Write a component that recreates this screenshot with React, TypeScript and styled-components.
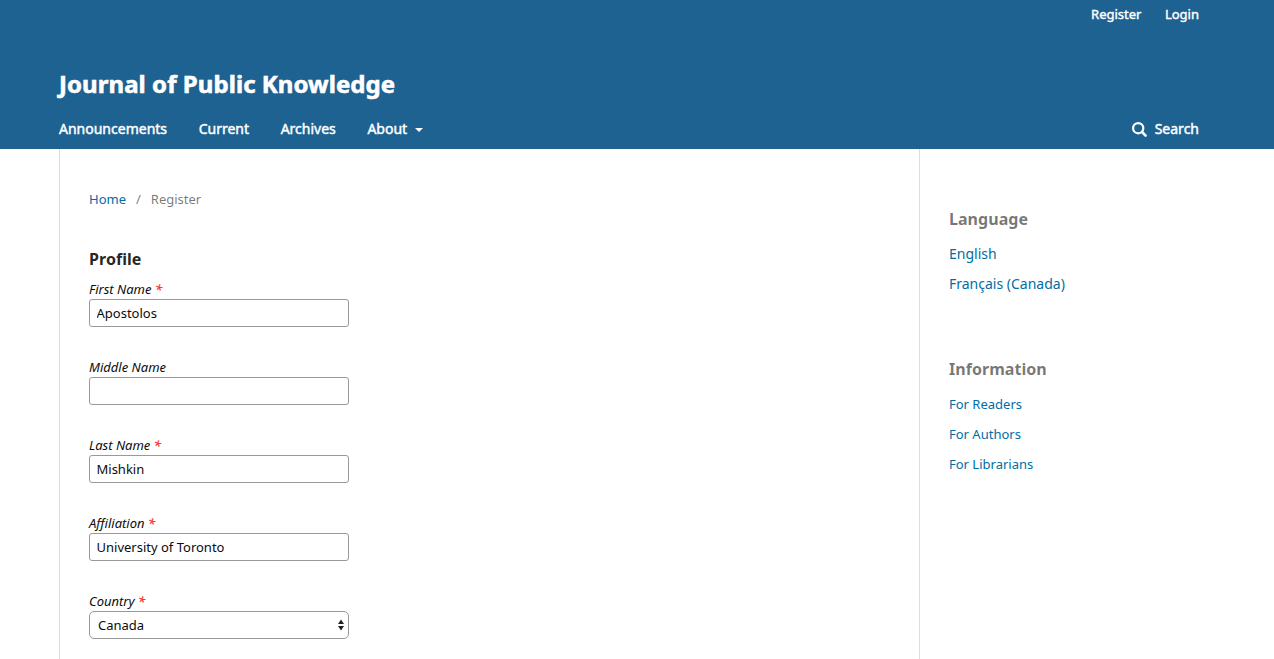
import React from "react";
import styled, { createGlobalStyle } from "styled-components";

const Global = createGlobalStyle`
  * { box-sizing: border-box; }
  html, body { margin: 0; padding: 0; background: #fff; height: 100%; overflow: hidden; }
  body { font-family: "Noto Sans", sans-serif; font-size: 14px; line-height: 20px; color: rgba(0,0,0,0.87); }
  a { color: #006ea6; text-decoration: none; }
`;
const Page = styled.div`height: 659px; display: flex; flex-direction: column; overflow: hidden;`;
const Header = styled.header`
  height: 149px; flex: none; background: #1e6292; padding: 0 75px 0 59px;
  a { color: #fff; }
`;
const UserNav = styled.nav`
  display: flex; justify-content: flex-end; gap: 23.5px; height: 64px; padding-top: 4px;
  font-size: 13px; -webkit-text-stroke: 0.4px #fff;
`;
const Title = styled.h1`
  margin: 0; font-size: 24px; line-height: 40px; height: 55px; font-weight: 700; letter-spacing: 0.06px;
  white-space: nowrap; -webkit-text-stroke: 0.6px #fff;
`;
const NavRow = styled.div`display: flex; justify-content: space-between; font-size: 14px; -webkit-text-stroke: 0.45px #fff;`;
const Menu = styled.nav`display: flex; gap: 31.6px;`;
const MenuLink = styled.a`display: flex; align-items: center; white-space: nowrap;`;
const Caret = styled.span`
  margin: 2px 0 0 8px; border: 4px solid transparent; border-top-color: #fff; border-bottom: 0;
`;
const SearchIcon = styled.svg`width: 15px; height: 15px; margin-right: 8px;`;
const Body = styled.div`flex: 1; display: flex; margin-left: 59px; min-height: 0;`;
const Main = styled.main`width: 861px; border: solid #ddd; border-width: 0 1px; padding: 40px 29px 0; overflow: hidden;`;
const Crumbs = styled.div`
  display: flex; font-size: 13px; color: rgba(0,0,0,0.54); height: 60px;
  span { margin: 0 10px; }
`;
const Legend = styled.h2`margin: 0; font-size: 16px; line-height: 20px; height: 30px; font-weight: 700; letter-spacing: 0.06px;`;
const Field = styled.label`
  display: block; width: 260px; height: 78px; font-size: 13px; font-style: italic; color: #0c0c0c;
  b { color: #ff2c2c; font-weight: 400; -webkit-text-stroke: 0.25px #ff2c2c; }
`;
const Box = styled.div`
  height: 28px; border: 1px solid #999; border-radius: 5px; padding: 0 4px 0 8px;
  font-style: normal; display: flex; align-items: center; justify-content: space-between;
`;
const Input = styled.input`
  display: block; width: 260px; height: 28px; border: 1px solid #999; border-radius: 3px;
  padding: 0 6.5px; font: 13px/26px "Noto Sans", sans-serif; color: #0c0c0c; outline: 0;
`;
const Side = styled.aside`padding: 60px 29px 0;`;
const Block = styled.section<{ $size: number }>`
  height: 150px; font-size: ${p => p.$size}px;
  h2 { margin: 0 0 15px; font-size: 16px; line-height: 20px; color: rgba(0,0,0,0.54); letter-spacing: 0.04px; }
  a { display: block; margin-bottom: 10px; white-space: nowrap; }
`;

const fields = [
  { label: "First Name", required: true, value: "Apostolos" },
  { label: "Middle Name", required: false, value: "" },
  { label: "Last Name", required: true, value: "Mishkin" },
  { label: "Affiliation", required: true, value: "University of Toronto" },
];

export default function App() {
  return (
    <Page>
      <Global />
      <Header>
        <UserNav><a href="#">Register</a><a href="#">Login</a></UserNav>
        <Title><a href="#">Journal of Public Knowledge</a></Title>
        <NavRow>
          <Menu>
            <MenuLink href="#">Announcements</MenuLink>
            <MenuLink href="#">Current</MenuLink>
            <MenuLink href="#">Archives</MenuLink>
            <MenuLink href="#">About<Caret /></MenuLink>
          </Menu>
          <MenuLink href="#">
            <SearchIcon viewBox="0 0 15 15" fill="none" stroke="#fff" strokeWidth="2.2">
              <circle cx="6.2" cy="6.2" r="5.1" /><path d="M10 10l3.6 3.6" strokeLinecap="round" strokeWidth="2.6" />
            </SearchIcon>
            Search
          </MenuLink>
        </NavRow>
      </Header>
      <Body>
        <Main>
          <Crumbs><a href="#">Home</a><span>/</span>Register</Crumbs>
          <Legend>Profile</Legend>
          {fields.map(f => (
            <Field key={f.label}>
              {f.label} {f.required && <b>*</b>}
              <Input defaultValue={f.value} />
            </Field>
          ))}
          <Field as="div">
            Country <b>*</b>
            <Box>
              Canada
              <svg width="6" height="12" viewBox="0 0 6 12" fill="#222"><path d="M3 0.5L6 5H0zM3 11.5L6 7H0z" /></svg>
            </Box>
          </Field>
        </Main>
        <Side>
          <Block $size={14}><h2>Language</h2><a href="#">English</a><a href="#">Français (Canada)</a></Block>
          <Block $size={13}><h2>Information</h2><a href="#">For Readers</a><a href="#">For Authors</a><a href="#">For Librarians</a></Block>
        </Side>
      </Body>
    </Page>
  );
}
